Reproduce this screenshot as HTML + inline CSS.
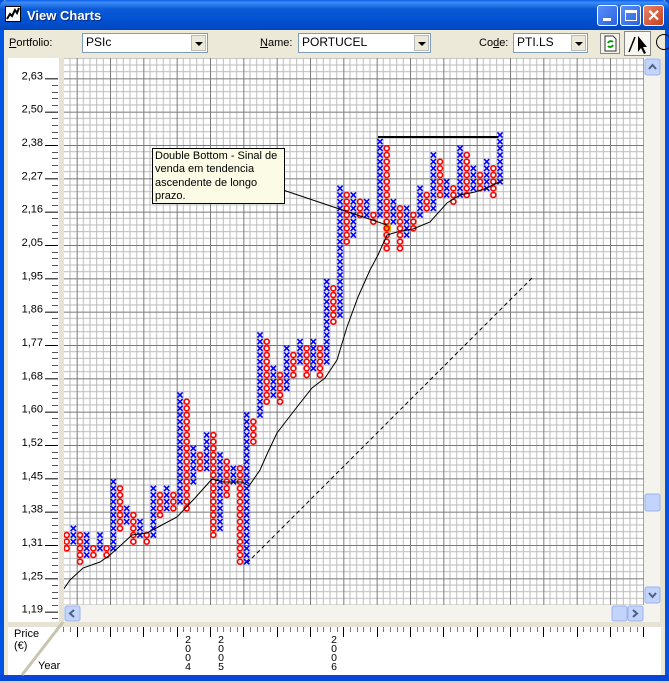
<!DOCTYPE html>
<html><head><meta charset="utf-8">
<style>
*{margin:0;padding:0;box-sizing:border-box}
body{width:669px;height:683px;overflow:hidden;background:#ece9d8;font-family:"Liberation Sans",sans-serif;font-size:11px;position:relative}
.abs{position:absolute}
.title{left:0;top:0;width:669px;height:30px;background:linear-gradient(#0a5fe8 0%,#3d8cf7 8%,#0b5bd8 30%,#0050d0 70%,#0046c0 100%);border-radius:7px 7px 0 0}
.ttext{left:27px;top:8px;color:#fff;font-weight:bold;font-size:13px;text-shadow:1px 1px #0a2a80}
.btn{top:5px;width:21px;height:21px;border:1px solid #fff;border-radius:3px;background:linear-gradient(135deg,#5a8ff8,#2a63e0)}
.lb{top:37px;color:#000;font-size:11px}
.combo{top:33px;height:20px;background:#fff;border:1px solid #7f9db9;font-size:12px;padding:1px 3px}
.arr{position:absolute;right:1px;top:1px;width:15px;height:16px;background:#ece9d8;border:1px solid #bbb}
.arr:after{content:"";position:absolute;left:3px;top:6px;border-left:4px solid transparent;border-right:4px solid transparent;border-top:4px solid #000}
</style></head><body>
<div class="abs" style="left:0;top:0;width:4px;height:683px;background:#0054e3"></div>
<div class="abs" style="left:665px;top:0;width:4px;height:683px;background:#0054e3"></div>
<div class="abs" style="left:0;top:675px;width:669px;height:6px;background:#0846d8"></div>
<div class="abs title"></div>
<div class="abs" style="left:5px;top:6px;width:16px;height:16px;background:#fff;border:1px solid #000"><svg width="14" height="14"><path d="M1 12 L4 7 L6 9 L9 3 L11 6 L13 1" stroke="#000" stroke-width="2" fill="none"/></svg></div>
<div class="abs ttext">View Charts</div>
<div class="abs btn" style="left:597px"><div class="abs" style="left:5px;top:12px;width:8px;height:3px;background:#fff"></div></div>
<div class="abs btn" style="left:620px"><div class="abs" style="left:4px;top:4px;width:12px;height:11px;border:1px solid #fff;border-top-width:3px"></div></div>
<div class="abs btn" style="left:643px;background:linear-gradient(135deg,#e8846a,#c8401c)"><div class="abs" style="left:3px;top:0;color:#fff;font-size:16px;font-weight:bold">✕</div></div>

<div class="abs lb" style="left:9px"><u>P</u>ortfolio:</div>
<div class="abs combo" style="left:82px;width:126px">PSIc<div class="arr"></div></div>
<div class="abs lb" style="left:260px"><u>N</u>ame:</div>
<div class="abs combo" style="left:298px;width:133px">PORTUCEL<div class="arr"></div></div>
<div class="abs lb" style="left:479px">Co<u>d</u>e:</div>
<div class="abs combo" style="left:513px;width:75px">PTI.LS<div class="arr"></div></div>
<div class="abs" style="left:600px;top:33px;width:20px;height:21px;border:1px solid #888;background:#f4f2ea"><svg width="18" height="19"><path d="M4 2 H12 L15 5 V17 H4 Z" fill="#fff" stroke="#333"/><path d="M7 9 A3 3 0 0 1 12 8 M12 11 A3 3 0 0 1 7 12" stroke="#090" stroke-width="1.8" fill="none"/></svg></div>
<div class="abs" style="left:624px;top:31px;width:27px;height:25px;border:1px solid #888;background:#f8f7f2"><svg width="27" height="25"><path d="M4 20 L10 5" stroke="#000" stroke-width="1.5"/><path d="M13 4 L13 20 L16 16 L19 22 L21 21 L18 15 L22 15 Z" fill="#000"/></svg></div>
<div class="abs" style="left:656px;top:34px;width:16px;height:16px;border:1.5px solid #000;border-radius:50%"></div>

<div class="abs" style="left:8px;top:58px;width:51px;height:569px;background:#fff"></div>
<div class="abs" style="left:59px;top:58px;width:5px;height:569px;background:#e6e3d4"></div>
<div class="abs" style="left:8px;top:622px;width:653px;height:5px;background:#e6e3d4"></div>
<div class="abs" style="left:8px;top:627px;width:653px;height:48px;background:#fff"></div>
<div class="abs" style="left:660px;top:58px;width:5px;height:569px;background:#e6e3d4"></div>
<div class="abs" style="left:14px;top:628px;font-size:11px;line-height:12px">Price<br>(€)</div>
<div class="abs" style="left:38px;top:660px;font-size:11px">Year</div>

<svg class="abs" style="left:0;top:0" width="669" height="683" id="sv">
<defs>
<pattern id="g" patternUnits="userSpaceOnUse" x="43.33" y="45" width="33.333" height="33.333">
<rect width="34" height="34" fill="#fff"/>
<path d="M6.67 0V34M13.33 0V34M20 0V34M26.67 0V34M0 6.67H34M0 13.33H34M0 20H34M0 26.67H34" stroke="#bcbcbc" stroke-width="1"/>
<path d="M0.5 0V34M0 0.5H34" stroke="#7a7a7a" stroke-width="1"/>
</pattern>
<clipPath id="cc"><rect x="64" y="58" width="580" height="547"/></clipPath>
</defs>
<rect x="64" y="58" width="580" height="547" fill="url(#g)"/>
<line x1="63" y1="622" x2="22" y2="675" stroke="#c8c4b0" stroke-width="3"/>
<g id="dyn" clip-path="url(#cc)"></g>
<g id="ax"></g>
<rect x="644" y="58" width="16" height="547" fill="#f4f3ee"/>
<rect x="645" y="59" width="15" height="16" rx="2" fill="#c3d4fc" stroke="#9cb4ea"/>
<path d="M649 69 L652.5 65 L656 69" stroke="#4d6185" stroke-width="2" fill="none"/>
<rect x="645" y="494" width="15" height="17" rx="2" fill="#c3d4fc" stroke="#9cb4ea"/>
<rect x="645" y="587" width="15" height="16" rx="2" fill="#c3d4fc" stroke="#9cb4ea"/>
<path d="M649 593 L652.5 597 L656 593" stroke="#4d6185" stroke-width="2" fill="none"/>
<rect x="64" y="605" width="596" height="17" fill="#f4f3ee"/>
<rect x="65" y="606" width="15" height="15" rx="2" fill="#c3d4fc" stroke="#9cb4ea"/>
<path d="M74 610 L70 613.5 L74 617" stroke="#4d6185" stroke-width="2" fill="none"/>
<rect x="612" y="606" width="15" height="15" rx="2" fill="#c3d4fc" stroke="#9cb4ea"/>
<rect x="628" y="606" width="15" height="15" rx="2" fill="#c3d4fc" stroke="#9cb4ea"/>
<path d="M633 610 L637 613.5 L633 617" stroke="#4d6185" stroke-width="2" fill="none"/>
<g font-family="Liberation Sans,sans-serif" font-size="10.5" fill="#000" text-anchor="middle">
<text x="188" y="643">2</text><text x="188" y="652">0</text><text x="188" y="661">0</text><text x="188" y="670">4</text>
<text x="221" y="643">2</text><text x="221" y="652">0</text><text x="221" y="661">0</text><text x="221" y="670">5</text>
<text x="334" y="643">2</text><text x="334" y="652">0</text><text x="334" y="661">0</text><text x="334" y="670">6</text>
</g>
</svg>
<div class="abs" style="left:152px;top:148px;width:133px;height:56px;background:#fbfbe6;border:1px solid #000;font-size:11px;line-height:13.3px;padding:1px 2px">Double Bottom - Sinal de venda em tendencia ascendente de longo prazo.</div>
<div class="abs" style="left:0;top:681px;width:669px;height:2px;background:#d4d0c8"></div>
<script>
var d=document.getElementById("dyn"),ax=document.getElementById("ax"),h="";
var cols=[["O",68,70],["X",67,69],["O",68,72],["X",68,71],["O",70,71],["X",68,70],["O",70,71],["X",60,70],["O",61,67],["X",64,66],["O",65,69],["X",66,68],["O",68,69],["X",61,68],["O",62,65],["X",61,64],["O",62,64],["X",47,63],["O",48,64],["X",55,60],["O",56,58],["X",53,58],["O",53,68],["X",56,67],["O",57,62],["X",58,60],["O",58,72],["X",50,72],["O",51,54],["X",38,50],["O",39,48],["X",43,47],["O",44,48],["X",40,46],["O",41,44],["X",39,42],["O",40,44],["X",39,43],["O",40,44],["X",30,42],["O",31,36],["X",16,35],["O",17,24],["X",17,23],["O",18,20],["X",18,20],["O",20,21],["X",9,20],["O",10,25],["X",18,21],["O",19,25],["X",19,23],["O",20,22],["X",16,20],["O",17,19],["X",11,19],["O",12,17],["X",15,17],["O",16,18],["X",10,17],["O",11,17],["X",13,16],["O",14,16],["X",12,16],["O",13,17],["X",8,15]];
h+='<rect x="384" y="224.5" width="7" height="7" fill="#c8b400"/>';
cols.forEach(function(c,i){var x=66.67+6.667*i;for(var r=c[1];r<=c[2];r++){var y=81.67+6.667*r;
if(c[0]=="X")h+='<path d="M'+(x-2.6)+' '+(y-2.6)+'L'+(x+2.6)+' '+(y+2.6)+'M'+(x+2.6)+' '+(y-2.6)+'L'+(x-2.6)+' '+(y+2.6)+'" stroke="#0000ff" stroke-width="1.6"/>';
else h+='<circle cx="'+x+'" cy="'+y+'" r="2.5" fill="none" stroke="#ff0000" stroke-width="1.6"/>';}});
h+='<polyline fill="none" stroke="#000" stroke-width="1" points="63,590 70,580 83,568 100,562 110,555 120,546 132,535 147,533 160,526 177,517 195,498 212,479 223,482 242,482 249,486 260,470 268,452 277,433 297,407 312,388 325,378 337,360 347,327 358,297 370,270 378,255 387,235 397,232 413,229 430,222 447,203 460,195 475,192 487,188 503,180"/>';
h+='<line x1="283" y1="190" x2="387" y2="225" stroke="#000"/>';
h+='<line x1="378" y1="137" x2="498" y2="137" stroke="#000" stroke-width="2"/>';
h+='<line x1="247" y1="563" x2="532" y2="278" stroke="#000" stroke-dasharray="4,3"/>';
d.innerHTML=h;
var labs=["2,63","2,50","2,38","2,27","2,16","2,05","1,95","1,86","1,77","1,68","1,60","1,52","1,45","1,38","1,31","1,25","1,19"],a="";
for(var k=0;k<17;k++){var y=78.33+33.333*k;a+='<text x="43" y="'+(y+1)+'" font-size="11" text-anchor="end" font-family="Liberation Sans,sans-serif">'+labs[k]+'</text><line x1="45" y1="'+(y+.5)+'" x2="58" y2="'+(y+.5)+'" stroke="#000"/>';
for(var j=1;j<5;j++){var yy=Math.round(y+6.667*j)+.5;if(yy<620)a+='<line x1="52" y1="'+yy+'" x2="58" y2="'+yy+'" stroke="#555"/>';}}
for(var i=-2;i<90;i++){var x=Math.round(76.67+6.667*i)+.5;if(x<63||x>644)continue;var big=((i%5)+5)%5==0;a+='<line x1="'+x+'" y1="627" x2="'+x+'" y2="'+(big?637:632)+'" stroke="'+(big?'#000':'#777')+'"/>';}
ax.innerHTML=a;
</script>
</body></html>
